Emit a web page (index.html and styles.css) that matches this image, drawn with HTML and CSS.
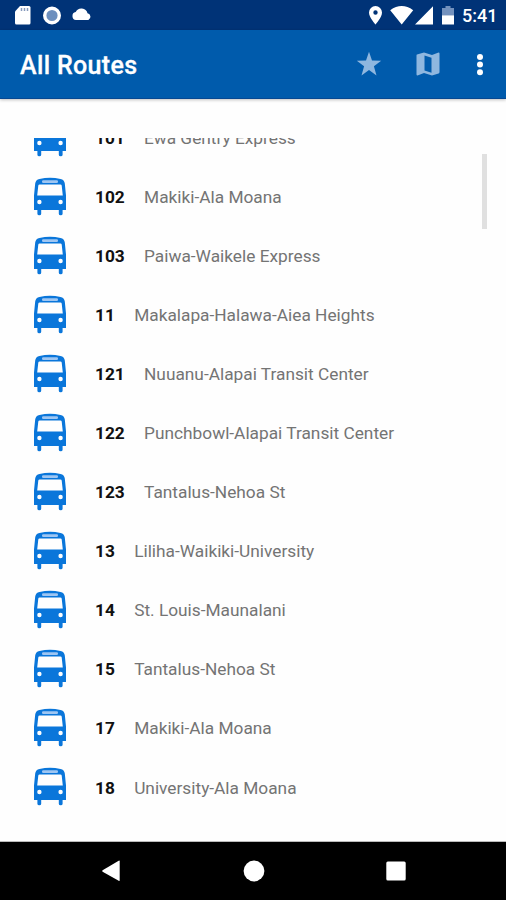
FILE: index.html
```
<!DOCTYPE html>
<html lang="en">
<head>
<meta charset="utf-8">
<title>All Routes</title>
<link rel="stylesheet" href="styles.css">
</head>
<body>
<svg class="defs" aria-hidden="true">
  <symbol id="bus" viewBox="0 0 34 40">
    <path fill="#0a76da" fill-rule="evenodd" d="M1 18.500 2.200 6.500Q2.600 2.800 6.500 1.900Q17-.5 27.500 1.900Q31.400 2.800 31.800 6.500L33 18.500V33H29.600V36.700Q29.600 38.300 27.700 38.300T25.800 36.700V33H8.200V36.700Q8.200 38.300 6.300 38.300T4.400 36.700V33H1ZM6.600 7.500Q5.500 7.500 5.300 8.600L4.200 18.400H29.800L28.700 8.600Q28.500 7.500 27.400 7.500ZM4.200 25a2.200 2.200 0 1 0 4.400 0a2.200 2.200 0 1 0-4.400 0ZM25.400 25a2.200 2.200 0 1 0 4.400 0a2.200 2.200 0 1 0-4.400 0Z"/>
    <rect x="9" y="3.200" width="16" height="2.800" rx="1.200" fill="#9fc6f2"/>
  </symbol>
</svg>
<div class="screen">
  <header class="status">
    <svg class="st-left" width="100" height="30" viewBox="0 0 100 30">
      <path fill="#fff" d="M20 6h9q1.500 0 1.500 1.500v15.500q0 1.500-1.500 1.500H16.500q-1.500 0-1.500-1.500V11.500Z"/>
      <path stroke="#879abd" stroke-width="1.500" d="M21.500 8v3M24.500 8v3M27.500 8v3"/>
      <circle cx="52" cy="15.500" r="7.300" fill="#6c8fbe" stroke="#fff" stroke-width="3.400"/>
      <path fill="#fff" d="M76 20a4 4 0 0 1-.3-7.900A6.300 6.300 0 0 1 87.500 13.200A3.600 3.600 0 0 1 88.400 20Z"/>
    </svg>
    <svg class="st-right" width="92" height="30" viewBox="366 0 92 30">
      <path fill="#fff" fill-rule="evenodd" d="M375.500 6a6.500 6.500 0 0 1 6.500 6.500c0 4.800-6.500 12-6.500 12s-6.500-7.200-6.500-12a6.500 6.500 0 0 1 6.500-6.500ZM375.500 10.300a2.200 2.200 0 1 0 0 4.400a2.200 2.200 0 1 0 0-4.400Z"/>
      <path fill="#fff" d="M390.200 10.200Q401.700 1.800 413.200 10.200L401.700 24.500ZM415 24.500 433 6.200V24.500Z"/>
      <path fill="#7391bd" d="M442 8h3.500V6h5v2h3.500v7.500H442Z"/>
      <path fill="#fff" d="M442 15.300h12v9.200H442Z"/>
    </svg>
    <span class="clock">5:41</span>
  </header>
  <nav class="bar">
    <h1>All Routes</h1>
    <svg class="star" width="26" height="26" viewBox="0 0 26 26"><path fill="#8fb7df" d="M13 .8 16 9.500 25.200 9.700 17.900 15.300 20.500 24.400 13 19 5.500 24.400 8.100 15.300 .8 9.700 10 9.500Z"/></svg>
    <svg class="map" width="24" height="26" viewBox="0 0 24 26"><path fill="#8fb7df" fill-rule="evenodd" d="M1 3.500 8 1.500 16 4 22.600 1.500Q23.500 1.500 23.500 2.500V21Q23.500 22 22.600 22.500L16 24.500 8 22 1.500 24.500Q.5 24.500 .5 23.500V4.500Q.5 3.700 1 3.500ZM8.500 4.500V19.400L15.500 21.700V6.700Z"/></svg>
    <svg class="more" width="8" height="24" viewBox="0 0 8 24"><g fill="#fff"><circle cx="4" cy="4" r="3"/><circle cx="4" cy="11.600" r="3"/><circle cx="4" cy="19.200" r="3"/></g></svg>
  </nav>
  <main class="viewport">
    <ul class="routes">
      <li><svg class="bus"><use href="#bus"/></svg><b>101</b><span>Ewa Gentry Express</span></li>
      <li><svg class="bus"><use href="#bus"/></svg><b>102</b><span>Makiki-Ala Moana</span></li>
      <li><svg class="bus"><use href="#bus"/></svg><b>103</b><span>Paiwa-Waikele Express</span></li>
      <li><svg class="bus"><use href="#bus"/></svg><b>11</b><span>Makalapa-Halawa-Aiea Heights</span></li>
      <li><svg class="bus"><use href="#bus"/></svg><b>121</b><span>Nuuanu-Alapai Transit Center</span></li>
      <li><svg class="bus"><use href="#bus"/></svg><b>122</b><span>Punchbowl-Alapai Transit Center</span></li>
      <li><svg class="bus"><use href="#bus"/></svg><b>123</b><span>Tantalus-Nehoa St</span></li>
      <li><svg class="bus"><use href="#bus"/></svg><b>13</b><span>Liliha-Waikiki-University</span></li>
      <li><svg class="bus"><use href="#bus"/></svg><b>14</b><span>St. Louis-Maunalani</span></li>
      <li><svg class="bus"><use href="#bus"/></svg><b>15</b><span>Tantalus-Nehoa St</span></li>
      <li><svg class="bus"><use href="#bus"/></svg><b>17</b><span>Makiki-Ala Moana</span></li>
      <li><svg class="bus"><use href="#bus"/></svg><b>18</b><span>University-Ala Moana</span></li>
    </ul>
    <div class="thumb"></div>
  </main>
  <footer class="navkeys">
    <svg width="22" height="22" viewBox="0 0 22 22"><path fill="#fff" d="M18.700 1.200V20.300Q18.700 21.300 17.700 20.800L1.600 11.700Q.6 10.900 1.600 10.200L17.700 .8Q18.700 .3 18.700 1.200Z"/></svg>
    <svg width="22" height="22" viewBox="0 0 22 22"><circle cx="11" cy="11" r="10.400" fill="#fff"/></svg>
    <svg width="22" height="22" viewBox="0 0 22 22"><rect x="1.300" y="1.500" width="19.400" height="19" rx="1.500" fill="#fff"/></svg>
  </footer>
</div>
</body>
</html>
```
FILE: styles.css
```
* { box-sizing: border-box; }
body { margin: 0; font-family: Roboto, "Liberation Sans", sans-serif; }
svg { display: block; flex: none; }
.defs { position: absolute; width: 0; height: 0; }
.screen {
  width: 506px;
  height: 900px;
  display: flex;
  flex-direction: column;
  overflow: hidden;
  background: #fefefe;
}
.status {
  height: 30px;
  flex: none;
  display: flex;
  align-items: center;
  background: #003377;
}
.st-right { margin-left: 266px; }
.clock {
  margin: 2px 0 0 4px;
  color: #fff;
  font-size: 18px;
  font-weight: 500;
  line-height: 24px;
}
.bar {
  height: 69px;
  flex: none;
  display: flex;
  align-items: center;
  padding: 0 22px 0 20px;
  background: #005bac;
  border-bottom: 1px solid #064892;
  box-shadow: 0 1px 3px rgba(0, 0, 0, .25);
}
.bar h1 {
  margin: 4px auto 0 0;
  color: #fff;
  font-size: 25px;
  font-weight: 500;
  letter-spacing: .35px;
  line-height: 32px;
  -webkit-text-stroke: .3px #fff;
}
.map { margin-left: 34px; }
.more { margin: 1px 0 0 36px; }
.viewport {
  flex: 1;
  margin-top: 39px;
  display: flex;
  align-items: flex-start;
  justify-content: space-between;
  overflow: hidden;
  border-bottom: 1px solid #bbb;
}
.routes {
  margin: -30px 0 0;
  padding: 0 0 0 33px;
  list-style: none;
}
.routes li {
  height: 59.05px;
  display: flex;
  align-items: center;
  white-space: nowrap;
  font-size: 17.300px;
  line-height: 24px;
  color: #747474;
}
.routes b {
  margin: 1px 19.300px 0 28px;
  color: #111;
  font-weight: 700;
}
.routes span { margin-top: 1px; }
.bus { width: 34px; height: 40px; }
.thumb {
  width: 5px;
  height: 75px;
  margin: 16px 19px 0 0;
  background: #e0e0e0;
}
.navkeys {
  height: 58px;
  flex: none;
  display: flex;
  align-items: center;
  justify-content: space-between;
  padding: 0 99px 0 101px;
  background: #000;
}
```
